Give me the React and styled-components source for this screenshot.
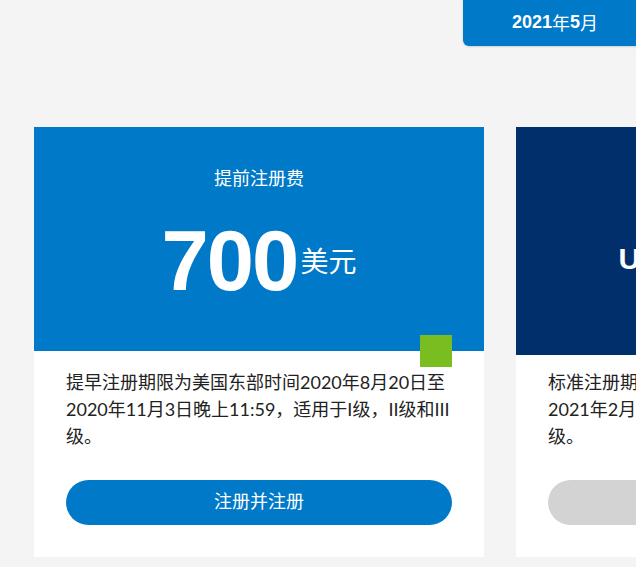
import React from 'react';
import styled, { createGlobalStyle } from 'styled-components';

const GlobalStyle = createGlobalStyle`
  html, body {
    margin: 0;
    padding: 0;
    background: #f4f4f4;
    overflow: hidden;
  }
  body {
    font-family: Lato, "Noto Sans CJK SC", sans-serif;
  }
`;

const Page = styled.div`
  width: 1100px;
  height: 567px;
`;

const TopBar = styled.div`
  display: flex;
  padding-left: 463px;
`;

const MonthTab = styled.div`
  width: 184px;
  height: 46px;
  background: #0079c8;
  border-radius: 0 0 0 6px;
  display: flex;
  align-items: center;
  justify-content: center;
  padding-bottom: 2px;
  box-sizing: border-box;
  color: #fff;
  font-size: 18px;
  font-family: "Liberation Sans", "Noto Sans CJK SC", sans-serif;
  font-weight: 700;
  box-shadow: 0 1px 2px rgba(0, 0, 0, 0.15);

  span {
    font-weight: 400;
  }
`;

const CardRow = styled.div`
  display: flex;
  gap: 32px;
  padding-left: 34px;
  margin-top: 81px;
`;

const Card = styled.div`
  position: relative;
  width: 450px;
  flex-shrink: 0;
  background: #fff;
`;

const Header = styled.div`
  height: ${p => p.$height}px;
  background: ${p => p.$color};
  color: #fff;
  display: flex;
  flex-direction: column;
  align-items: center;
  padding-top: 39px;
  box-sizing: border-box;
`;

const Title = styled.div`
  font-size: 18px;
  line-height: 24px;
`;

const PriceRow = styled.div`
  display: flex;
  align-items: center;
  margin-top: 28px;
`;

const Amount = styled.div`
  font-family: "Liberation Sans", sans-serif;
  font-weight: 700;
  font-size: 85px;
  line-height: 1;
  letter-spacing: -2px;
`;

const Unit = styled.div`
  font-size: 28px;
  line-height: 1;
  margin-left: 3px;
`;

const WordPrice = styled.div`
  font-family: "Liberation Sans", sans-serif;
  font-weight: 700;
  font-size: 30px;
  line-height: 1;
  margin-top: 54px;
  white-space: nowrap;
`;

const Marker = styled.div`
  position: absolute;
  left: 386px;
  top: 208px;
  width: 32px;
  height: 32px;
  background: #7abd20;
`;

const Body = styled.div`
  padding: ${p => p.$top}px 32px 32px;
`;

const Text = styled.p`
  margin: 0;
  font-size: 18px;
  line-height: 27px;
  color: #222;
`;

const Button = styled.button`
  display: block;
  width: 100%;
  height: 45px;
  margin-top: 30px;
  padding: 0 0 5px;
  border: none;
  border-radius: 23px;
  background: ${p => (p.$disabled ? '#d3d3d3' : '#0079c8')};
  color: #fff;
  font-family: Lato, "Noto Sans CJK SC", sans-serif;
  font-size: 18px;
  cursor: pointer;
`;

const App = () => {
  return (
    <Page>
      <GlobalStyle />
      <TopBar>
        <MonthTab>
          2021<span>年</span>5<span>月</span>
        </MonthTab>
      </TopBar>
      <CardRow>
        <Card>
          <Header $height={224} $color="#0079c8">
            <Title>提前注册费</Title>
            <PriceRow>
              <Amount>700</Amount>
              <Unit>美元</Unit>
            </PriceRow>
          </Header>
          <Marker />
          <Body $top={18}>
            <Text>
              提早注册期限为美国东部时间2020年8月20日至2020年11月3日晚上11:59，适用于I级，II级和III级。
            </Text>
            <Button>注册并注册</Button>
          </Body>
        </Card>
        <Card>
          <Header $height={228} $color="#002f6b">
            <Title>标准注册费</Title>
            <WordPrice>USD 1,000 美元起</WordPrice>
          </Header>
          <Body $top={14}>
            <Text>
              标准注册期限为美国东部时间2020年11月4日至2021年2月28日晚上11:59，适用于I级，II级和III级。
            </Text>
            <Button $disabled>即将推出</Button>
          </Body>
        </Card>
      </CardRow>
    </Page>
  );
};

export default App;
